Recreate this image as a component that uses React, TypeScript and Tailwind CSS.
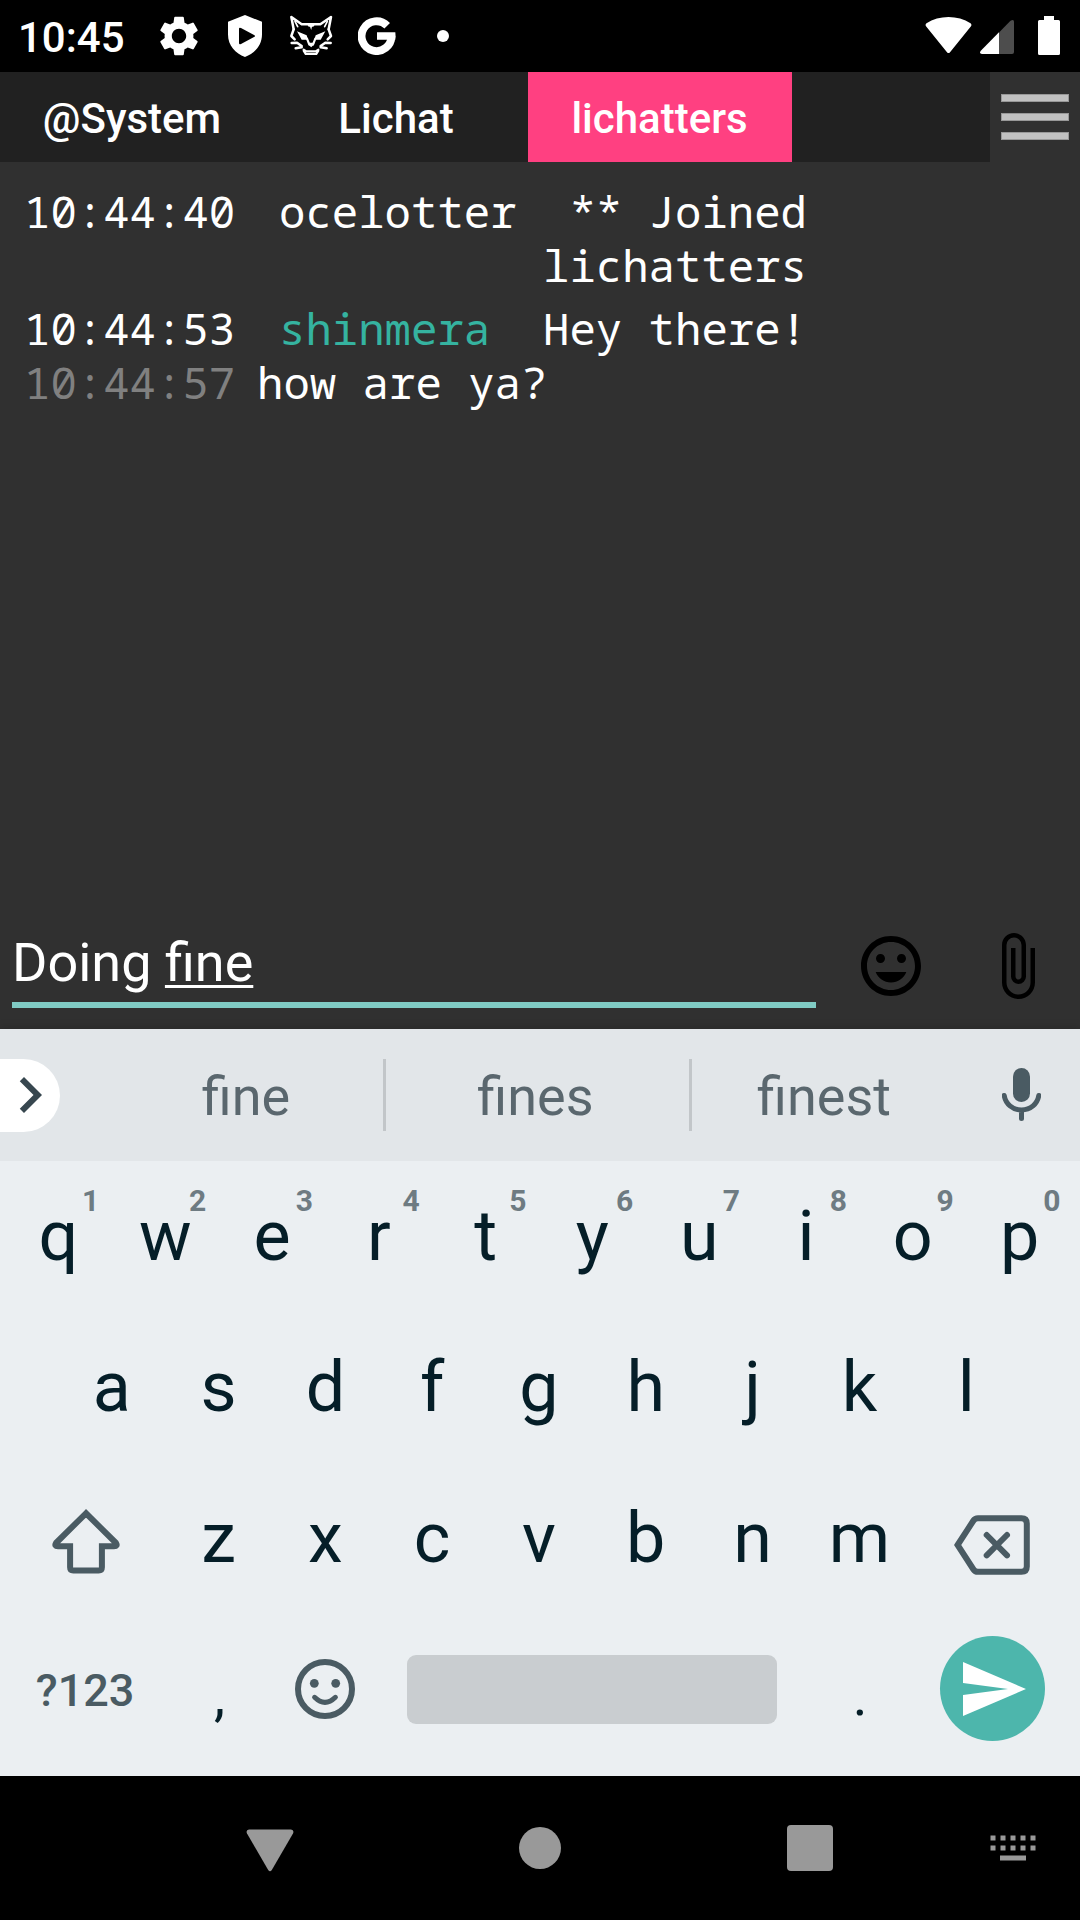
import React from "react";
import { MdAttachFile, MdChevronRight, MdInsertEmoticon, MdSend, MdSettings } from "react-icons/md";

function ShieldIcon() {
  return (
    <svg width="34" height="42" viewBox="0 0 34 42">
      <path
        fill="#fff"
        fillRule="evenodd"
        d="M17 0 34 6.8V19.500C34 30.500 26.500 38.500 17 42 7.500 38.500 0 30.500 0 19.500V6.800ZM11 14V28Q11 30 13 29L26.500 21.800Q27.500 21 26.500 20.200L13 13Q11 12 11 14Z"
      />
    </svg>
  );
}

function CatIcon() {
  return (
    <svg width="56" height="52" viewBox="0 0 168 156" fill="none" stroke="#fff" strokeLinejoin="round" strokeLinecap="round">
      <g strokeWidth="7.5">
        <path d="M32 58 25 21 56 43H112L144 21 137 58" />
        <path d="M36 34 44 50M133 34 125 50" strokeWidth="5" />
        <path d="M32 58 25 78 35 88M137 58 144 78 134 88" />
        <path d="M26 99 42 98 56 108M143 99 127 98 113 108" />
        <path d="M38 115 56 112M131 115 113 112" />
        <path d="M62 119 70 124H98L106 119M62 122 68 132H100L106 122" strokeWidth="6.5" />
        <path d="M72 86 79 104M97 86 90 104" strokeWidth="6.5" />
      </g>
      <path fill="#fff" stroke="none" d="M72 42H97L91 50 87 50 84.500 60 81 50 77 50ZM42 64 71 76 75 89 56 89ZM127 64 98 76 94 89 113 89ZM74 98H95L89 107 84.500 112 80 107Z" />
    </svg>
  );
}

function GoogleIcon() {
  return (
    <svg width="38" height="38" viewBox="0 0 38 38">
      <path d="M29.200 8.800A14.900 14.900 0 1 0 33.400 19" fill="none" stroke="#fff" strokeWidth="7.800" />
      <path d="M19 15.300H37.300Q37.800 19 37.300 22.700H19Z" fill="#fff" />
    </svg>
  );
}

function StatusBar() {
  return (
    <header className="flex h-[72px] items-center bg-black">
      <span className="box-content w-32 pt-[3px] pl-[18px] text-[42px] leading-[69px] font-medium">10:45</span>
      <div className="flex w-[66px] justify-center"><MdSettings size={48} /></div>
      <div className="flex w-[66px] justify-center"><ShieldIcon /></div>
      <div className="flex w-[66px] justify-center"><CatIcon /></div>
      <div className="flex w-[66px] justify-center"><GoogleIcon /></div>
      <div className="flex w-[66px] justify-center"><div className="size-3 rounded-full bg-white" /></div>
      <div className="ml-auto flex pr-5">
        <svg className="mr-2" width="47" height="40" viewBox="0 0 47 40">
          <path fill="#fff" d="M1.200 10.500Q-.2 8.800 1.500 7.300C14-1 33-1 45.500 7.300Q47.200 8.800 45.800 10.500L25 36.200Q23.500 38 22 36.200Z" />
        </svg>
        <svg className="mr-6" width="34" height="40" viewBox="0 0 34 40">
          <path fill="#4d4d4d" d="M19 16.500 30.500 4.800Q34 2.500 34 6V36Q34 38 32 38H19Z" />
          <path fill="#fff" d="M19 16.200V38H2Q-1.200 37.500 .8 34.700Z" />
        </svg>
        <svg width="22" height="40" viewBox="0 0 22 40">
          <path fill="#fff" d="M6 0H16V4H20.500Q22 4 22 5.500V37.500Q22 39 20.500 39H1.500Q0 39 0 37.500V5.500Q0 4 1.500 4H6Z" />
        </svg>
      </div>
    </header>
  );
}

function Tab({ name, active = false }: { name: string; active?: boolean }) {
  return (
    <div className={`flex w-[264px] items-center justify-center pt-[3px] text-[42px] leading-none font-medium ${active ? "bg-[#ff4081] pr-px" : ""}`}>
      {name}
    </div>
  );
}

function TabBar() {
  return (
    <nav className="flex h-[90px] bg-[#212121]">
      <Tab name="@System" />
      <Tab name="Lichat" />
      <Tab name="lichatters" active />
      <div className="ml-auto flex w-[90px] flex-col gap-[11px] bg-[#303030] pt-[22px] pl-[11px]">
        <div className="h-2 w-[68px] border border-[#989898] bg-[#c1c1c1]" />
        <div className="h-2 w-[68px] border border-[#989898] bg-[#c1c1c1]" />
        <div className="h-2 w-[68px] border border-[#989898] bg-[#c1c1c1]" />
      </div>
    </nav>
  );
}

function Chat() {
  return (
    <main className="h-[762px] pt-[22px] pl-6 font-['Noto_Sans_Mono','Liberation_Mono',monospace] text-[44px] leading-[54px]">
      <div className="flex w-[783px]">
        <span className="w-[255px]">10:44:40</span>
        <span>ocelotter</span>
        <span className="ml-auto w-[264px] text-right">** Joined lichatters</span>
      </div>
      <div className="mt-[9px] flex w-[783px]">
        <span className="w-[255px]">10:44:53</span>
        <span className="text-[#35b3a0]">shinmera</span>
        <span className="ml-auto w-[264px]">Hey there!</span>
      </div>
      <div className="flex">
        <span className="w-[233px] text-[#808080]">10:44:57</span>
        <span>how are ya?</span>
      </div>
    </main>
  );
}

function Composer() {
  return (
    <div className="flex h-[105px] pl-3">
      <div className="h-[84px] w-[804px] border-b-[6px] border-[#80cbc4] text-[54px] leading-[77px]">
        Doing <span className="underline decoration-[3px] underline-offset-[4px] [text-decoration-skip-ink:none]">fine</span>
      </div>
      <MdInsertEmoticon className="mt-1.5 ml-[39px] text-black" size={72} />
      <MdAttachFile className="mt-1.5 ml-[54px] text-black" size={72} />
    </div>
  );
}

function Suggestions() {
  return (
    <div className="flex h-[132px] items-center bg-[#e2e6e9] text-[54px] leading-none text-[#5a676e]">
      <div className="mr-[49px] flex h-[73px] w-[60px] items-center overflow-hidden rounded-r-full bg-white">
        <MdChevronRight className="-ml-1.5 shrink-0 text-[#37474f]" size={72} />
      </div>
      <div className="w-[274px] pt-[4px] text-center">fine</div>
      <div className="h-[72px] w-[3px] bg-[#c2c6c9]" />
      <div className="w-[303px] pt-[4px] pr-[4px] text-center">fines</div>
      <div className="h-[72px] w-[3px] bg-[#c2c6c9]" />
      <div className="w-[264px] pt-[4px] text-center">finest</div>
      <svg className="ml-[46px]" width="39" height="54" viewBox="0 0 39 54">
        <rect x="11" y="0" width="17" height="34" rx="8.500" fill="#4a5b63" />
        <path d="M2.200 27.500C3.500 36 10.500 42 19.500 42S35.500 36 36.800 27.500M19.500 42V50.500" fill="none" stroke="#4a5b63" strokeWidth="5" strokeLinecap="round" />
      </svg>
    </div>
  );
}

function Key({ char, hint }: { char: string; hint?: string }) {
  return (
    <div className="relative flex h-full w-[106.8px] items-center justify-center pb-[2px]">
      {char}
      {hint && <span className="absolute top-[25px] right-[12.5px] text-[30px] leading-[30px] font-bold text-[#6e7b82]">{hint}</span>}
    </div>
  );
}

function PunctuationKey({ char }: { char: string }) {
  return <div className="w-[106.8px] pt-[12px] pl-[2px] text-center text-[56px]">{char}</div>;
}

function ShiftIcon() {
  return (
    <svg width="68" height="65" viewBox="0 0 68 65">
      <path
        d="M34 4.300 4 34Q2 37.200 6 37.200H18.100V58.300Q18.100 61.500 21.300 61.500H46.700Q49.900 61.500 49.900 58.300V37.200H62Q66 37.200 64 34Z"
        fill="none"
        stroke="#4a5b63"
        strokeWidth="6"
      />
    </svg>
  );
}

function BackspaceIcon() {
  return (
    <svg width="76" height="60" viewBox="0 0 76 60" fill="none" stroke="#4a5b63" strokeWidth="6">
      <path d="M3.600 30 19.500 5.500Q21 3.200 24 3.200H67.500Q72.800 3.200 72.800 8.500V51.500Q72.800 56.800 67.500 56.800H24Q21 56.800 19.500 54.500Z" />
      <path d="M32.700 20 53 40.300M53 20 32.700 40.300" strokeLinecap="round" />
    </svg>
  );
}

function SmileKeyIcon() {
  return (
    <svg width="60" height="60" viewBox="0 0 60 60">
      <circle cx="30" cy="30" r="27" fill="none" stroke="#4a5b63" strokeWidth="6" />
      <circle cx="19.300" cy="24.300" r="4.400" fill="#4a5b63" />
      <circle cx="40.700" cy="24.300" r="4.400" fill="#4a5b63" />
      <path d="M19.600 38.300Q30 48.500 40.400 38.300" fill="none" stroke="#4a5b63" strokeWidth="5" strokeLinecap="round" />
    </svg>
  );
}

function Keyboard() {
  return (
    <section className="relative h-[747px] bg-[#ebeff2] text-[70px] leading-none text-[#051e28] shadow-[0_-1px_9px_rgba(0,0,0,0.18)]">
      <Suggestions />
      <div className="flex h-[151px] pl-[5px]">
        {[..."qwertyuiop"].map((c, i) => <Key key={c} char={c} hint={String((i + 1) % 10)} />)}
      </div>
      <div className="flex h-[151px] pl-[58.400px]">
        {[..."asdfghjkl"].map((c) => <Key key={c} char={c} />)}
      </div>
      <div className="flex h-[151px] pl-[5px]">
        <div className="flex w-[160.200px] items-center justify-center pt-[5px] pl-px"><ShiftIcon /></div>
        {[..."zxcvbnm"].map((c) => <Key key={c} char={c} />)}
        <div className="flex w-[160.200px] items-center justify-center pt-[13px] pr-[2px]"><BackspaceIcon /></div>
      </div>
      <div className="flex h-[151px] items-center pl-[5px]">
        <div className="w-[160.200px] pt-[2px] text-center text-[45px] font-medium text-[#4a5b63]">?123</div>
        <PunctuationKey char="," />
        <div className="flex w-[106.800px] justify-center pb-[2px]"><SmileKeyIcon /></div>
        <div className="mr-[29px] ml-[28px] h-[69px] w-[370px] rounded-[9px] bg-[#c9cdd0]" />
        <PunctuationKey char="." />
        <div className="flex w-[160.200px] justify-center pb-[2px]">
          <div className="flex size-[105px] items-center justify-center rounded-full bg-[#4db6ac] pl-px text-white"><MdSend size={72} /></div>
        </div>
      </div>
    </section>
  );
}

function NavBar() {
  return (
    <footer className="grid h-[144px] grid-cols-[135px_270px_270px_270px_135px] place-items-center bg-black">
      <span />
      <svg width="48" height="48" viewBox="0 0 48 48">
        <path fill="#999" d="M3 5.500H45Q48.500 6 47 9.500L25.800 46Q24 48.500 22.200 46L1 9.500Q-.5 6 3 5.500Z" />
      </svg>
      <div className="size-[42px] rounded-full bg-[#999]" />
      <div className="size-[46px] rounded-[4px] bg-[#999]" />
      <svg width="46" height="26" viewBox="0 0 46 26" fill="#999">
        {[0, 10].map((y) => [0, 10, 20, 30, 40].map((x) => <rect key={`${x}-${y}`} x={x + 0.5} y={y + 0.5} width="5" height="5" />))}
        <rect x="10" y="20.500" width="26" height="5" />
      </svg>
    </footer>
  );
}

export default function App() {
  return (
    <div className="h-[1920px] w-[1080px] overflow-hidden bg-[#303030] font-['Roboto',sans-serif] text-white">
      <StatusBar />
      <TabBar />
      <Chat />
      <Composer />
      <Keyboard />
      <NavBar />
    </div>
  );
}
